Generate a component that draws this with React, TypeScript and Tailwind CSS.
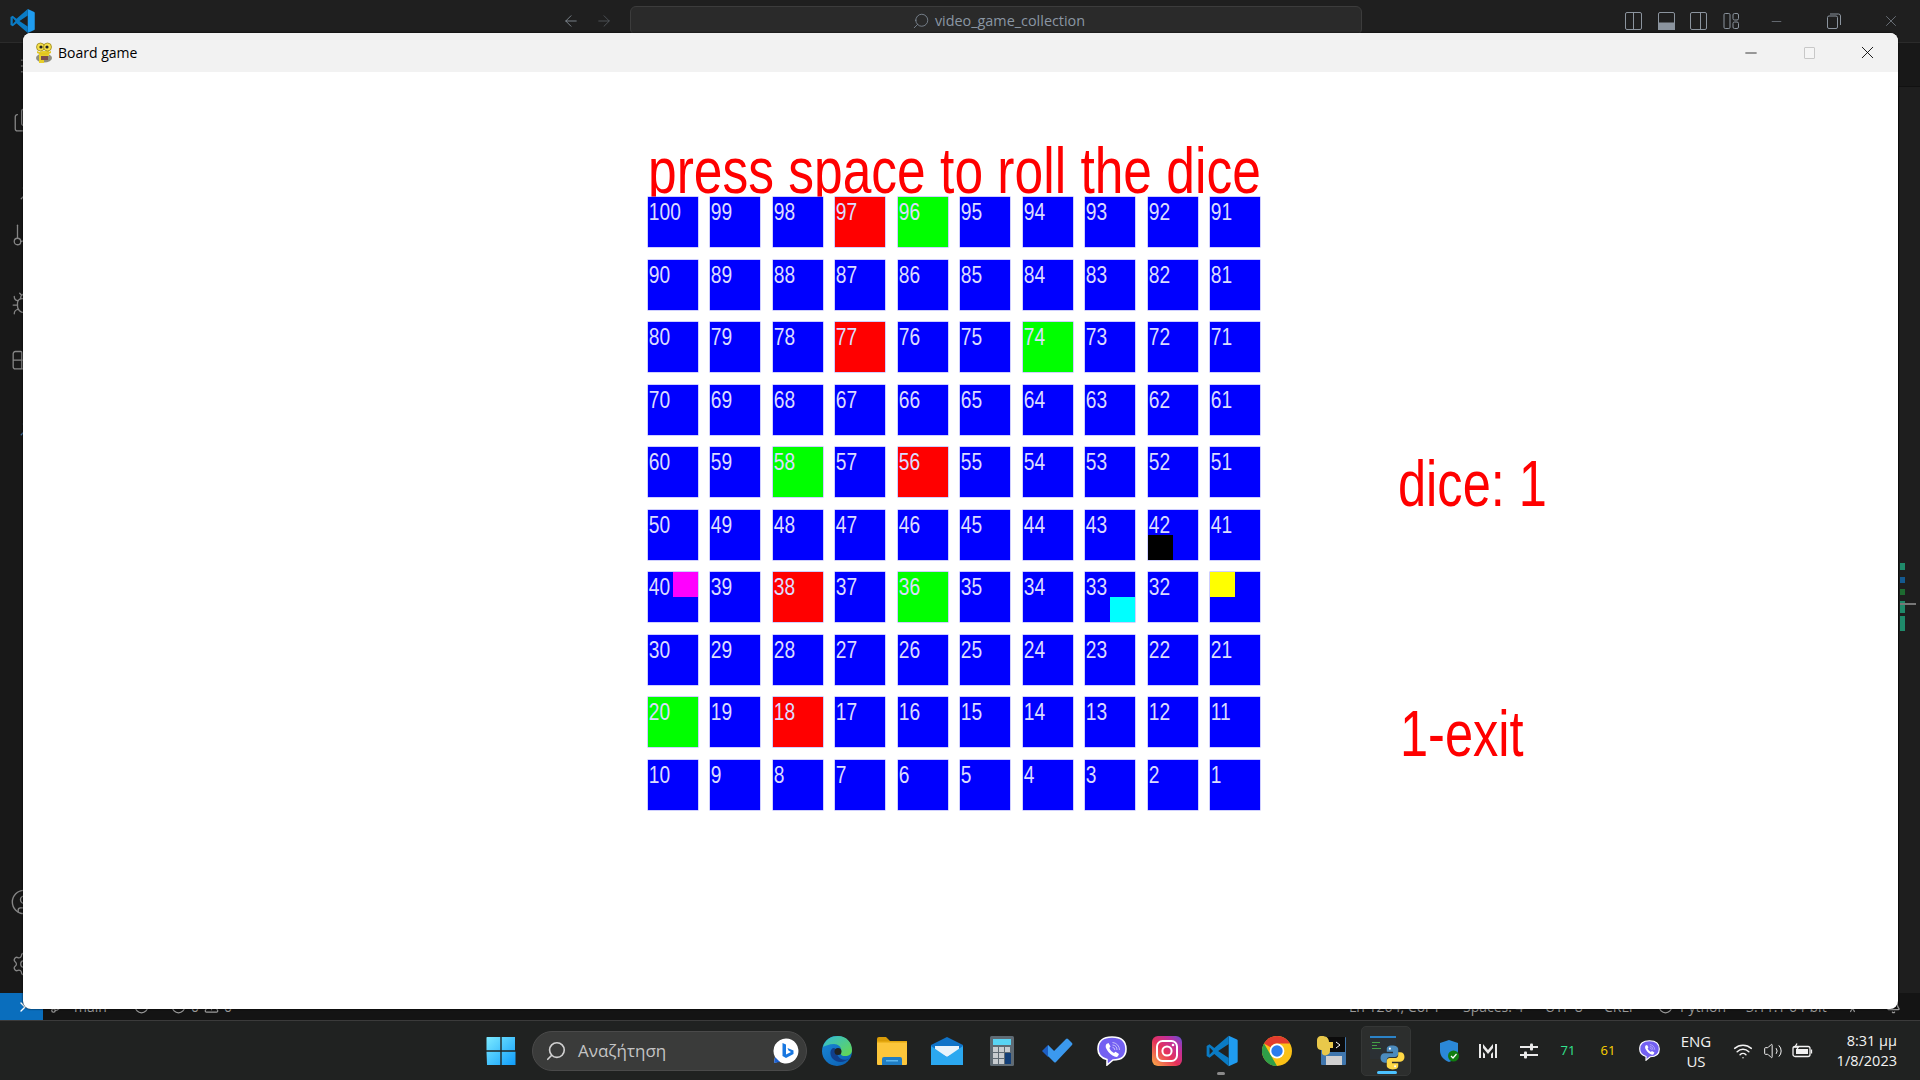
import { Menu, Files, Search, GitBranch, Bug, Blocks, CircleUser, Settings, ArrowLeft, ArrowRight, ChevronRight, CircleX, TriangleAlert, X, Minus, Bell, Wifi, Volume2, CircleDot, PersonStanding } from "lucide-react";
import type { ReactNode } from "react";

const RED = new Set([97, 77, 56, 38, 18]);
const GREEN = new Set([96, 74, 58, 36, 20]);

function rows(): number[][] {
  const out: number[][] = [];
  for (let r = 9; r >= 0; r--) {
    const row: number[] = [];
    for (let c = 10; c >= 1; c--) row.push(r * 10 + c);
    out.push(row);
  }
  return out;
}

function Cell({ n }: { n: number }) {
  const bg = RED.has(n) ? "bg-[#ff0000]" : GREEN.has(n) ? "bg-[#00ff00]" : "bg-[#0000ff]";
  return (
    <div className={`relative w-[50px] h-[50px] ${bg} shadow-[0_0_0_0.5px_#a0a0ff]`}>
      <span className="block pt-[1px] pl-[1px] text-[24px] leading-[27px] text-[#dcdcff] origin-left scale-x-[0.8] whitespace-nowrap font-['Liberation_Sans',sans-serif]">
        {n === 31 ? "" : n}
      </span>
      {n === 42 && <div className="absolute left-0 bottom-0 w-[25px] h-[25px] bg-black" />}
      {n === 40 && <div className="absolute right-0 top-0 w-[25px] h-[25px] bg-[#ff00ff]" />}
      {n === 33 && <div className="absolute right-0 bottom-0 w-[25px] h-[25px] bg-[#00ffff]" />}
      {n === 31 && <div className="absolute left-0 top-0 w-[25px] h-[25px] bg-[#ffff00]" />}
    </div>
  );
}

function PygameIcon() {
  return (
    <svg width="20" height="22" viewBox="0 0 20 22">
      <ellipse cx="10" cy="16" rx="8" ry="4.5" fill="#8f8f80" />
      <path d="M5 21 L5 12 Q5 9 9 9 L15 9 L15 14 L10 14 L10 21 Z" fill="#e8cf2a" />
      <circle cx="6.5" cy="5" r="4" fill="#f6e04a" stroke="#8c7a12" strokeWidth="0.7" />
      <circle cx="13.5" cy="5" r="4" fill="#f6e04a" stroke="#8c7a12" strokeWidth="0.7" />
      <circle cx="7" cy="5" r="1.6" fill="#222" />
      <circle cx="13" cy="5" r="1.6" fill="#222" />
      <path d="M3 9 Q10 13 17 9 L17 11 Q10 15 3 11 Z" fill="#e2c521" />
      <rect x="7" y="14" width="7" height="4" fill="#7a4c4c" />
    </svg>
  );
}

function VsCodeLogo({ size = 28 }: { size?: number }) {
  return (
    <svg width={size} height={size} viewBox="0 0 100 100">
      <path d="M71 2 L97 14 Q99 15 99 18 L99 82 Q99 85 97 86 L71 98 L71 2Z" fill="#1f9cf0" />
      <path d="M71 2 L71 28 L38 50 L71 72 L71 98 L26 59 L11 71 L2 66 L2 34 L11 29 L26 41Z M11 38 L11 62 L22 50Z" fill="#0a7bc4" fillRule="evenodd" />
    </svg>
  );
}

function WinLogo() {
  return (
    <svg width="30" height="30" viewBox="0 0 30 30">
      <defs>
        <linearGradient id="w" x1="0" y1="0" x2="1" y2="1">
          <stop offset="0" stopColor="#7ceaff" />
          <stop offset="1" stopColor="#0f9dfb" />
        </linearGradient>
      </defs>
      <path d="M1 1 H14.3 V14.3 H0.5 V1.5Z M15.7 1 H29 V14.3 H15.7Z M0.5 15.7 H14.3 V29 H1Z M15.7 15.7 H29.5 V29 H15.7Z" fill="url(#w)" />
    </svg>
  );
}

function BingIcon() {
  return (
    <svg width="28" height="28" viewBox="0 0 28 28">
      <path d="M14 1.5a12.5 12.5 0 1 1 -7 22.9 L2 26 L3 20 A12.5 12.5 0 0 1 14 1.5Z" fill="#ffffff" />
      <path d="M3 20 L2 26 L8 25Z" fill="#1a5fd0" />
      <path d="M10.5 6 L14 7.5 L14 17.5 L19 15 L16.5 13.5 L15.5 11 L21.5 13.5 L21.5 17 L14 21 L10.5 19Z" fill="#1877e0" />
    </svg>
  );
}

function EdgeIcon() {
  return (
    <svg width="32" height="32" viewBox="0 0 32 32">
      <defs>
        <linearGradient id="e1" x1="0" y1="0" x2="1" y2="1">
          <stop offset="0" stopColor="#32bcd8" />
          <stop offset="1" stopColor="#67d84a" />
        </linearGradient>
        <linearGradient id="e2" x1="0" y1="0" x2="1" y2="1">
          <stop offset="0" stopColor="#1a8ad8" />
          <stop offset="1" stopColor="#0b5db0" />
        </linearGradient>
      </defs>
      <circle cx="16" cy="16" r="15" fill="url(#e2)" />
      <path d="M2 12 C4 4 11 1 17 1 C26 1 31 8 31 15 C31 19 28 21 24 21 C20 21 19 19 20 16 C21 12 17 9 13 9 C8 9 4 11 2 12Z" fill="url(#e1)" />
      <path d="M13 13 C9 13 8 20 12 24 C17 29 25 27 29 23 C25 26 19 25 17 21 C15 18 16 14 13 13Z" fill="#103f8c" />
      <circle cx="17" cy="16.5" r="3.5" fill="#202221" />
    </svg>
  );
}

function FolderIcon() {
  return (
    <svg width="30" height="28" viewBox="0 0 30 28">
      <path d="M0 2 Q0 0 2 0 H9 L13 4 H0Z" fill="#d99c08" />
      <rect x="0" y="4" width="30" height="24" rx="1" fill="#fcc63b" />
      <rect x="0" y="4" width="30" height="1.5" fill="#e4a70f" />
      <path d="M5 28 V22 Q5 20 7 20 H23 Q25 20 25 22 V28Z" fill="#1f7dc4" />
      <rect x="9" y="23" width="12" height="1.5" fill="#5cb7ef" />
    </svg>
  );
}

function MailIcon() {
  return (
    <svg width="32" height="28" viewBox="0 0 32 28">
      <path d="M0 8 L16 0 L32 8 L32 27 L0 27Z" fill="#0f73c8" />
      <path d="M4 9 H28 L28 14 L16 20 L4 14Z" fill="#e8f3fb" />
      <path d="M0 9 L16 20 L32 9 V28 H0Z" fill="#2ba8f0" />
    </svg>
  );
}

function CalcIcon() {
  return (
    <svg width="24" height="30" viewBox="0 0 24 30">
      <rect width="24" height="30" rx="1.5" fill="#5f6b74" />
      <rect x="3" y="3" width="18" height="6" fill="#58d4f4" />
      {[0, 1, 2, 3, 4, 5, 6, 7, 8].map((i) => (
        <rect key={i} x={3 + (i % 3) * 6} y={11 + Math.floor(i / 3) * 6} width="5" height="5" fill="#c7ccd0" />
      ))}
      <rect x="15" y="17" width="6" height="11" fill="#123f78" />
    </svg>
  );
}

function TodoIcon() {
  return (
    <svg width="32" height="26" viewBox="0 0 32 26">
      <path d="M1 13 L7 7 L13 13 L7 19Z" fill="#1d5fc4" />
      <path d="M7 7 L13 13 L25 1 Q26 0 27 1 L31 5 Q32 6 31 7 L15 24 Q14 25 13 24 L7 18Z" fill="#3b99ee" />
    </svg>
  );
}

function ViberIcon({ size = 30 }: { size?: number }) {
  return (
    <svg width={size} height={size} viewBox="0 0 30 30">
      <path d="M15 1 C24 1 29 5 29 13 C29 21 24 24 16 24 L10 29 L10 23.5 C4 22 1 19 1 13 C1 5 6 1 15 1Z" fill="#7360f2" stroke="#ffffff" strokeWidth="1.6" />
      <path d="M9.5 8 L11.5 7 L13.5 10.5 L12.3 12 C13 14 15 16 17 17 L18.5 15.8 L22 18 L21 20 C20 21.5 18 21 15.5 19.5 C12.5 17.5 10.5 15 9 12 C8.5 10.5 8.7 9 9.5 8Z" fill="#ffffff" />
      <path d="M15.5 6.5 A7.5 7.5 0 0 1 22.5 14 M15.5 9 A5 5 0 0 1 20 14 M15.5 11.3 A2.7 2.7 0 0 1 17.8 14" fill="none" stroke="#d8d3fb" strokeWidth="0.8" />
    </svg>
  );
}

function InstaIcon() {
  return (
    <svg width="30" height="30" viewBox="0 0 30 30">
      <defs>
        <linearGradient id="ig" x1="0" y1="1" x2="1" y2="0">
          <stop offset="0" stopColor="#fcb045" />
          <stop offset="0.45" stopColor="#e6325a" />
          <stop offset="0.75" stopColor="#c02f9e" />
          <stop offset="1" stopColor="#5b51d8" />
        </linearGradient>
      </defs>
      <rect width="30" height="30" rx="6" fill="url(#ig)" />
      <rect x="5" y="5" width="20" height="20" rx="5.5" fill="none" stroke="#fff" strokeWidth="2" />
      <circle cx="15" cy="15" r="4.6" fill="none" stroke="#fff" strokeWidth="2" />
      <circle cx="21" cy="9" r="1.3" fill="#fff" />
    </svg>
  );
}

function ChromeIcon() {
  return (
    <svg width="30" height="30" viewBox="0 0 30 30">
      <circle cx="15" cy="15" r="15" fill="#fbc116" />
      <path d="M15 0 A15 15 0 0 1 28 7.5 L15 7.5 A7.5 7.5 0 0 0 8.5 11.2 L2 7.5 A15 15 0 0 1 15 0Z" fill="#e33b2e" />
      <path d="M2 7.5 L8.5 18.8 L15 30 A15 15 0 0 1 2 7.5Z" fill="#2f9e48" />
      <circle cx="15" cy="15" r="7.4" fill="#fff" />
      <circle cx="15" cy="15" r="5.7" fill="#2c7cee" />
    </svg>
  );
}

function PythonSnake({ size = 24 }: { size?: number }) {
  return (
    <svg width={size} height={size} viewBox="0 0 24 24">
      <path d="M12 0.5 C7 0.5 6.5 2.5 6.5 4 V6.5 H12.5 V8 H4.5 C2 8 0.5 10 0.5 12.5 C0.5 15 2 17 4.5 17 H6.5 V14.5 C6.5 12.5 8 11.5 9.5 11.5 H14.5 C16 11.5 17.5 10.5 17.5 8.5 V4 C17.5 2 15 0.5 12 0.5Z" fill="#4b8bbe" />
      <path d="M12 23.5 C17 23.5 17.5 21.5 17.5 20 V17.5 H11.5 V16 H19.5 C22 16 23.5 14 23.5 11.5 C23.5 9 22 7 19.5 7 H17.5 V9.5 C17.5 11.5 16 12.5 14.5 12.5 H9.5 C8 12.5 6.5 13.5 6.5 15.5 V20 C6.5 22 9 23.5 12 23.5Z" fill="#ffd845" />
      <circle cx="9.5" cy="3.5" r="1" fill="#fff" />
      <circle cx="14.5" cy="20.5" r="1" fill="#fff" />
    </svg>
  );
}

function IdleIcon() {
  return (
    <svg width="30" height="30" viewBox="0 0 30 30">
      <rect x="4" y="1" width="25" height="28" rx="1" fill="#3f76ad" />
      <rect x="10" y="1" width="18" height="15" fill="#0b0b0b" />
      <path d="M19 6 L23 9 L19 12" fill="none" stroke="#fff" strokeWidth="1" />
      <rect x="9" y="20" width="16" height="9" fill="#d0d0d0" />
      <path d="M5 0 C1 0 0 2 0 5 V9 C0 13 2 14 5 14 V17 C5 19 8 20 10 19 C13 18 13 16 13 14 V12 H16 V6 H12 C12 2 9 0 5 0Z" fill="#e9c84a" />
    </svg>
  );
}

function PythonWindowIcon() {
  return (
    <div className="relative w-[32px] h-[32px]">
      <div className="absolute left-0 top-[1px] w-[26px] h-[23px] bg-[#2b3034] border-t-[2px] border-[#2b83c8]">
        <div className="mt-[4px] ml-[2px] w-[8px] h-[1px] bg-[#43a047]" />
        <div className="mt-[2px] ml-[2px] w-[5px] h-[1px] bg-[#43a047]" />
        <div className="mt-[2px] ml-[2px] w-[9px] h-[1px] bg-[#43a047]" />
      </div>
      <div className="absolute right-[-3px] bottom-[-3px]">
        <PythonSnake size={25} />
      </div>
    </div>
  );
}

function LayoutIcon({ kind }: { kind: "left" | "bottom" | "right" | "grid" }) {
  const c = "#8b949e";
  return (
    <svg width="17" height="18" viewBox="0 0 17 18" fill="none" stroke={c} strokeWidth="1">
      {kind === "grid" ? (
        <>
          <rect x="1" y="1.5" width="6" height="15" rx="1.2" />
          <rect x="10" y="1.5" width="5.5" height="6.5" rx="1.5" />
          <rect x="10" y="10" width="5.5" height="6.5" rx="1.5" />
        </>
      ) : (
        <>
          <rect x="0.5" y="0.5" width="16" height="17" rx="1.5" />
          {kind === "left" && <path d="M8.5 0.5 V17.5" />}
          {kind === "right" && <path d="M10.5 0.5 V17.5" />}
          {kind === "bottom" && <rect x="0.5" y="11" width="16" height="6.5" fill={c} />}
        </>
      )}
    </svg>
  );
}

function Tab({ children }: { children: ReactNode }) {
  return <div className="w-[57px] flex items-center justify-center shrink-0">{children}</div>;
}

export default function App() {
  const board = rows();
  return (
    <div className="relative w-[1920px] h-[1080px] overflow-hidden flex flex-col bg-[#181818] font-['Open_Sans',sans-serif]">
      {/* VS Code title bar */}
      <header className="h-[43px] shrink-0 flex items-center bg-[#1f1f1f] border-b border-[#2b2b2b]">
        <div className="ml-[8px] w-[28px] shrink-0 flex justify-center -translate-y-[0.5px]">
          <VsCodeLogo size={25} />
        </div>
        <div className="ml-[526px] flex items-center gap-[15px] w-[51px] shrink-0 text-[#8b949e]">
          <ArrowLeft size={18} strokeWidth={1.1} />
          <ArrowRight size={18} strokeWidth={1.1} className="opacity-50" />
        </div>
        <div className="ml-[17px] w-[732px] shrink-0 h-[29px] self-start mt-[6px] pl-[5px] rounded-[6px] border border-[#3c3c3c] bg-[#2a2a2a] flex items-center justify-center gap-[5px] text-[14.4px] text-[#8a96a3]">
          <Search size={18} strokeWidth={1} className="-scale-x-100" />
          <span>video_game_collection</span>
        </div>
        <div className="ml-[263px] shrink-0 flex items-center gap-[15.7px]">
          <LayoutIcon kind="left" />
          <LayoutIcon kind="bottom" />
          <LayoutIcon kind="right" />
          <LayoutIcon kind="grid" />
        </div>
        <div className="ml-[8px] flex items-center text-[#8b949e]">
          <Tab><Minus size={15} strokeWidth={1} /></Tab>
          <Tab>
            <svg width="14" height="16" viewBox="0 0 14 16" fill="none" stroke="currentColor"><rect x="0.5" y="3" width="10" height="12.5" rx="1.5" /><path d="M3 1 H11.5 Q13.5 1 13.5 3 V12" /></svg>
          </Tab>
          <Tab><X size={18} strokeWidth={0.9} /></Tab>
        </div>
      </header>

      {/* VS Code body behind the window */}
      <main className="flex-1 flex min-h-0">
        <nav className="w-[48px] shrink-0 flex flex-col items-center text-[#858585] bg-[#181818]">
          <Menu size={20} strokeWidth={1.2} className="mt-[13px] ml-[7px]" />
          <Files size={26} strokeWidth={1.2} className="mt-[31px] ml-[2px]" />
          <Search size={26} strokeWidth={1.2} className="mt-[43px] ml-[14px] -scale-x-100" />
          <GitBranch size={26} strokeWidth={1.2} className="mt-[20px]" />
          <Bug size={26} strokeWidth={1.2} className="mt-[43px]" />
          <Blocks size={26} strokeWidth={1.2} className="mt-[28px]" />
          <Search size={26} strokeWidth={1.2} className="mt-[41px] ml-[14px] -scale-x-100 text-[#3f6f9e]" />
          <div className="flex-1" />
          <CircleUser size={28} strokeWidth={1.2} className="mb-[35px]" />
          <Settings size={26} strokeWidth={1.2} className="mb-[16px]" />
        </nav>
        <div className="flex-1" />
        <aside className="relative w-[22px] shrink-0 bg-[#1e1e1e] border-l border-[#111] mt-[43px] border-t">
          <div className="absolute left-[1px] top-[476px] w-[5px] h-[7px] bg-[#1f8a6a]" />
          <div className="absolute left-[1px] top-[490px] w-[5px] h-[6px] bg-[#14598f]" />
          <div className="absolute left-[1px] top-[502px] w-[5px] h-[6px] bg-[#1d6b30]" />
          <div className="absolute left-[1px] top-[514px] w-[5px] h-[12px] bg-[#1f8a6a]" />
          <div className="absolute left-[1px] top-[529px] w-[5px] h-[15px] bg-[#1f8a6a]" />
          <div className="absolute left-[1px] top-[516px] w-[16px] h-[2px] bg-[#777]" />
        </aside>
      </main>

      {/* Status bar */}
      <footer className="h-[27px] shrink-0 flex items-center bg-[#141414] text-[#9a9a9a] text-[14px] whitespace-nowrap">
        <div className="w-[43px] h-full shrink-0 bg-[#0a6ebd] flex items-center justify-center text-white">
          <ChevronRight size={16} className="ml-[2px]" />
        </div>
        <GitBranch size={14} className="ml-[7px]" />
        <span className="ml-[10px] w-[36px]">main</span>
        <CircleDot size={15} className="ml-[24px]" />
        <CircleX size={15} className="ml-[22px]" />
        <span className="ml-[5px] w-[8px]">0</span>
        <TriangleAlert size={15} className="ml-[5px]" />
        <span className="ml-[5px]">0</span>
        <div className="flex-1" />
        <span className="w-[114px]">Ln 1264, Col 1</span>
        <span className="w-[82px]">Spaces: 4</span>
        <span className="w-[59px]">UTF-8</span>
        <span className="w-[54px]">CRLF</span>
        <CircleDot size={15} className="mr-[7px]" />
        <span className="w-[66px]">Python</span>
        <span className="w-[99px]">3.11.1 64-bit</span>
        <PersonStanding size={15} className="mr-[26px]" />
        <Bell size={15} className="mr-[19px]" />
      </footer>

      {/* Windows taskbar */}
      <footer className="h-[60px] shrink-0 flex items-center bg-[#202221] border-t border-[#3b3b3b] text-white">
        <div className="ml-[486px] shrink-0"><WinLogo /></div>
        <div className="ml-[16px] w-[275px] shrink-0 h-[40px] rounded-full bg-[#3a3b3a] border border-[#4a4a4a] flex items-center pl-[12px] pr-[6px]">
          <Search size={22} strokeWidth={1.8} className="text-[#d0d0d0] -scale-x-100" />
          <span className="ml-[11px] flex-1 text-[17px] text-[#c4c4c4]">Αναζήτηση</span>
          <BingIcon />
        </div>
        <div className="ml-[2px] flex items-center">
          {[
            <EdgeIcon key="e" />,
            <FolderIcon key="f" />,
            <MailIcon key="m" />,
            <CalcIcon key="c" />,
            <TodoIcon key="t" />,
            <ViberIcon key="v" />,
            <InstaIcon key="i" />,
            <VsCodeLogo key="s" size={32} />,
            <ChromeIcon key="ch" />,
            <IdleIcon key="id" />,
          ].map((icon, i) => (
            <div key={i} className="relative w-[55px] h-[50px] flex items-center justify-center">
              {icon}
              {i === 7 && <div className="absolute bottom-[1px] left-[23px] w-[8px] h-[3px] rounded-full bg-[#8a8a8a]" />}
            </div>
          ))}
          <div className="relative w-[50px] h-[50px] rounded-[5px] bg-[#2c2e2d] border border-[#353736] ml-[2px] flex items-center justify-center">
            <PythonWindowIcon />
            <div className="absolute bottom-[1px] left-[15px] w-[20px] h-[3px] rounded-full bg-[#4cc2ff]" />
          </div>
        </div>
        <div className="ml-[26px] flex items-center text-[#f2f2f2]">
          <div className="relative w-[24px] flex justify-center">
            <svg width="20" height="22" viewBox="0 0 20 22"><path d="M10 0 L19 3 V11 C19 16 15 20 10 22 C5 20 1 16 1 11 V3Z" fill="#2b88d8" /><circle cx="14.5" cy="16" r="5.5" fill="#107c10" /><path d="M12 16 L14 18 L17.5 14" fill="none" stroke="#fff" strokeWidth="1.2" /></svg>
          </div>
          <div className="ml-[15px] w-[24px] flex justify-center">
            <svg width="18" height="16" viewBox="0 0 18 16" fill="#eaeaea"><path d="M0 1 H2 V15 H0Z M16 1 H18 V15 H16Z M4 1 L9 7 L14 1 V5 L9 11 L4 5 Z M4 9 L6 11 V15 H4Z M12 11 L14 9 V15 H12Z" /></svg>
          </div>
          <div className="ml-[17px] w-[24px] flex justify-center">
            <svg width="18" height="16" viewBox="0 0 18 16" fill="#eaeaea"><rect x="0" y="3" width="18" height="2" /><rect x="0" y="11" width="18" height="2" /><rect x="10" y="0.5" width="3" height="7" rx="1" /><rect x="4" y="8.5" width="3" height="7" rx="1" /></svg>
          </div>
          <div className="ml-[15px] w-[24px] text-center text-[13px] text-[#32e58f]">71</div>
          <div className="ml-[16px] w-[24px] text-center text-[13px] text-[#ffd400]">61</div>
          <div className="ml-[17px] w-[24px] flex justify-center"><ViberIcon size={21} /></div>
          <div className="ml-[11px] w-[48px] text-center text-[15px] leading-[20px]">ENG<br />US</div>
          <div className="ml-[11px] w-[24px] flex justify-center"><Wifi size={20} strokeWidth={1.8} /></div>
          <div className="ml-[6px] w-[24px] flex justify-center"><Volume2 size={20} strokeWidth={1.2} /></div>
          <div className="ml-[6px] w-[24px] flex justify-center">
            <svg width="22" height="16" viewBox="0 0 22 16" fill="none" stroke="#f2f2f2" strokeWidth="1.3"><rect x="1" y="3.5" width="17" height="10" rx="2" /><rect x="4" y="6" width="12" height="5" fill="#f2f2f2" stroke="none" /><path d="M19.5 6.5 V10.5" /><path d="M5 0.5 L3 4 H6.5 L4.5 7" /></svg>
          </div>
          <div className="ml-[2px] w-[80px] text-right text-[14.5px] leading-[20px] whitespace-nowrap">8:31 μμ<br />1/8/2023</div>
        </div>
      </footer>

      {/* Pygame window */}
      <section className="absolute left-[23px] top-[33px] w-[1875px] h-[976px] rounded-[8px] overflow-hidden flex flex-col bg-white shadow-[0_0_2px_#000]">
        <div className="h-[39px] shrink-0 bg-[#f2f2f2] flex items-center pl-[11px] text-black">
          <PygameIcon />
          <span className="ml-[4px] text-[14px]">Board game</span>
          <div className="flex-1" />
          <Minus size={18} strokeWidth={1} className="mr-[43.5px]" />
          <div className="w-[11px] h-[12px] rounded-[1px] border border-[#c8c8c8] bg-[#f5f5f5] mr-[42.5px]" />
          <X size={21} strokeWidth={1} className="mr-[20px]" />
        </div>
        <div className="flex-1 flex pl-[625px] font-['Liberation_Sans',sans-serif] text-[#ff0000]">
          <div className="w-[612px] shrink-0 flex flex-col pt-[63px]">
            <div className="h-[62px] text-[64px] leading-[73px] origin-left scale-x-[0.805] whitespace-nowrap">press space to roll the dice</div>
            <div className="grid grid-cols-[repeat(10,50px)] auto-rows-[50px] gap-x-[12.44px] gap-y-[12.5px]">
              {board.flat().map((n) => (
                <Cell key={n} n={n} />
              ))}
            </div>
          </div>
          <div className="ml-[138px] flex flex-col pt-[376px]">
            <div className="text-[64px] leading-[73px] origin-left scale-x-[0.79] whitespace-nowrap">dice: 1</div>
            <div className="mt-[177px] ml-[2px] text-[64px] leading-[73px] origin-left scale-x-[0.79] whitespace-nowrap">1-exit</div>
          </div>
        </div>
      </section>
    </div>
  );
}
